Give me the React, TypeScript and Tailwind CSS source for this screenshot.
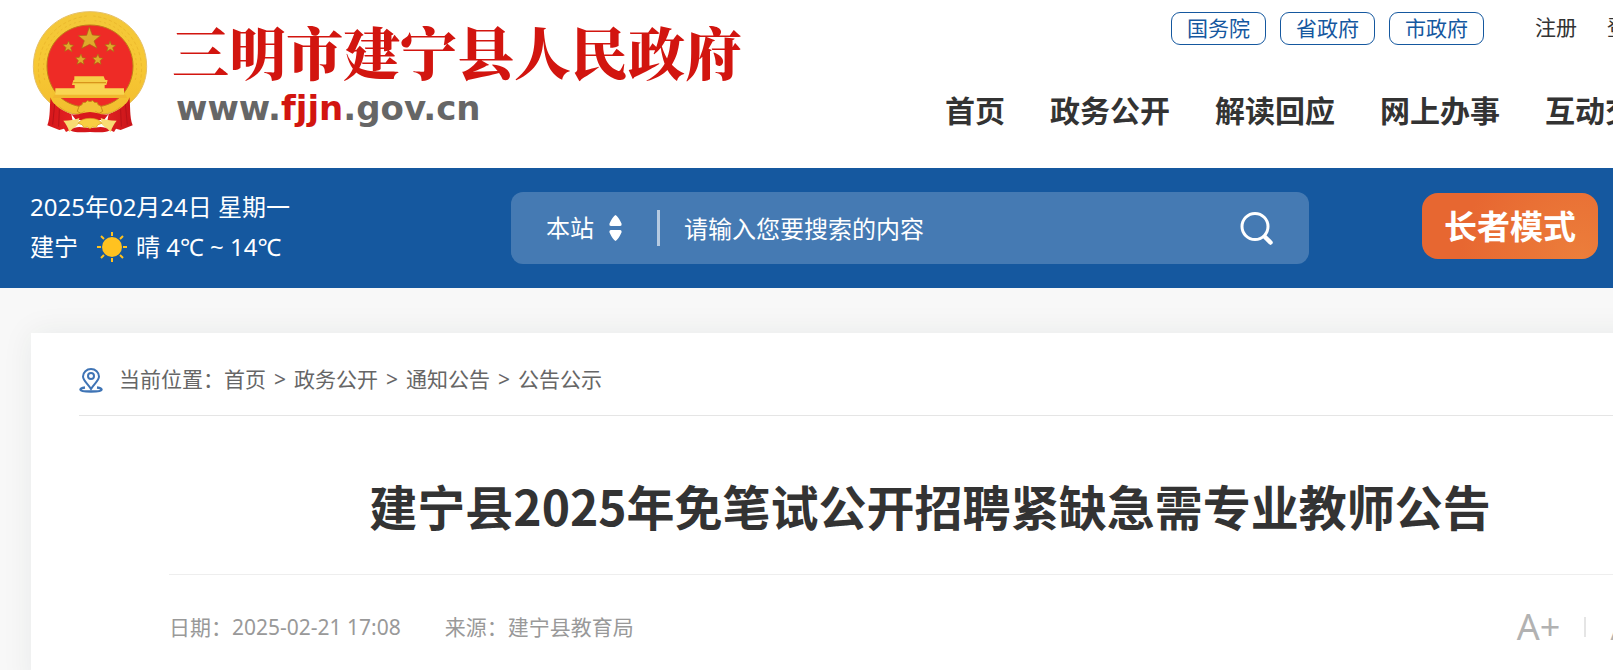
import { useState } from 'react';

const govLinks = ['国务院', '省政府', '市政府'];
const accountLinks = ['注册', '登录'];
const navItems = ['首页', '政务公开', '解读回应', '网上办事', '互动交流'];
const crumbs = ['首页', '政务公开', '通知公告', '公告公示'];

function Emblem() {
  return (
    <svg viewBox="36 30 348 372" className="h-[124px] w-[116px] shrink-0" aria-hidden="true">
      <defs>
        <linearGradient id="gold" x1="0" y1="0" x2="0" y2="1">
          <stop offset="0" stopColor="#f3c739" />
          <stop offset="0.5" stopColor="#f7c834" />
          <stop offset="1" stopColor="#f2bd2e" />
        </linearGradient>
        <linearGradient id="drape" x1="0" y1="0" x2="1" y2="0">
          <stop offset="0" stopColor="#d5161b" />
          <stop offset="0.5" stopColor="#ee2a25" />
          <stop offset="1" stopColor="#c9141a" />
        </linearGradient>
      </defs>
      {/* wreath */}
      <path
        d="M210 35C114 35 40 106 40 200c0 46 20 84 52 110 34 26 74 36 118 36s84-10 118-36c32-26 52-64 52-110C380 106 306 35 210 35z"
        fill="url(#gold)"
        stroke="#e5c067"
        strokeWidth="3"
      />
      <g fill="none" stroke="#d99a1a" strokeWidth="3" opacity="0.3">
        <path d="M60 250C38 150 95 62 200 48M360 250C382 150 325 62 220 48" strokeDasharray="10 7" />
        <path d="M74 240C56 150 106 72 196 62M346 240C364 150 314 72 224 62" strokeDasharray="6 9" />
      </g>
      <path
        d="M210 75C138 75 81 128 81 198c0 36 14 68 36 90 24 24 56 34 93 34s69-10 93-34c22-22 36-54 36-90 0-70-57-123-129-123z"
        fill="#ee2b26"
        stroke="#c27a18"
        strokeWidth="3"
      />
      {/* drapery */}
      <path
        d="M92 292c2 18 30 40 62 50l8 42-24 12-6-10-14 4-36-14c10-26 6-58 10-84zM328 292c-2 18-30 40-62 50l-8 42 24 12 6-10 14 4 36-14c-10-26-6-58-10-84z"
        fill="url(#drape)"
      />
      <path d="M104 312l-6 62M118 328l-2 52M316 312l6 62M302 328l2 52" stroke="#b81218" strokeWidth="3" fill="none" />
      <g fill="#dfaa2b" stroke="#a96d12" strokeWidth="2">
        <path d="M208 81l9 24 24 2-19 16 9 22-22-12-24 12 8-23-18-15 25-1z" />
        <path d="M146 123l4 11 11 2-9 7 4 12-11-7-11 6 4-11-9-9 12-1z" />
        <path d="M270 123l4 11 14 2-10 7 4 12-11-7-11 6 4-11-9-9 12-1z" />
        <path d="M183 162l4 11 11 2-9 7 3 11-10-6-11 6 4-11-8-9 11-1z" />
        <path d="M234 162l4 11 11 2-9 7 3 11-10-6-11 6 4-11-8-9 11-1z" />
      </g>
      {/* gate */}
      <path d="M163 229h88l4 10 8 2-4 14H156l4-14 3-2z" fill="#f6cf48" />
      <path d="M160 248h98" stroke="#d9951c" strokeWidth="4" />
      <path d="M164 253h90v12h58v26H106v-26h58z" fill="#f9d552" />
      <path d="M104 284h212l6 10H98z" fill="#f1b72f" />
      {/* cog wheel */}
      <path
        d="M172 334l4-12 2-4 8-4 2-6 9-1 5-5 8 3 8-3 5 5 9 1 2 6 8 4 2 4 4 12-16 10h-44z"
        fill="#f2c237"
        stroke="#c98a18"
        strokeWidth="3"
      />
      <path d="M118 320c24 22 56 28 76 14M302 320c-24 22-56 28-76 14" stroke="#e0a528" strokeWidth="3" fill="none" />
      <path d="M154 342c18 6 36-6 56-6s38 12 56 6l-14 18H168z" fill="#d9191c" />
      <path d="M130 362c20 0 34-2 48-8l-4 20-26 22c-4-14-10-24-18-34zM290 362c-20 0-34-2-48-8l4 20 26 22c4-14 10-24 18-34z" fill="#f8dc74" />
      <path d="M152 392c16-18 38-8 58-8s42-10 58 8c-18 8-38 4-58 4s-40 4-58-4z" fill="#d5161b" />
      <path
        d="M174 370c4-6 10-10 16-12 14-4 26-4 40 0 6 2 12 6 16 12l-12 4-6 9-10-2-8 5-8-5-10 2-6-9z"
        fill="#f8ce42"
        stroke="#d9951c"
        strokeWidth="2"
      />
    </svg>
  );
}

function SunIcon() {
  return (
    <svg viewBox="0 0 32 32" className="size-8 shrink-0" aria-hidden="true">
      <circle cx="16" cy="16" r="10" fill="#ffc220" />
      <g stroke="#ffc220" strokeWidth="2">
        <path d="M16 1v4M16 27v4M1 16h4M27 16h4M5 5l3 3M24 24l3 3M5 27l3-3M24 8l3-3" />
      </g>
    </svg>
  );
}

function PinIcon() {
  return (
    <svg viewBox="0 0 24 25" className="h-[25px] w-6 shrink-0" fill="none" stroke="#3f74b5" strokeWidth="2" aria-hidden="true">
      <path d="M12 21C9 16 4 12.500 4 8.500a8 7.500 0 0 1 16 0C20 12.500 15 16 12 21z" />
      <circle cx="12" cy="8" r="3" />
      <path d="M6 19.500c-3 .3-4.500 1-4.500 2.200 0 1.300 3 1.800 10.500 1.800s10.500-.5 10.500-1.800c0-1.200-1.500-1.900-4.500-2.200" strokeWidth="2.500" />
    </svg>
  );
}

function Header() {
  return (
    <header className="flex h-[168px] items-start justify-between bg-white px-[30px]">
      <a href="#" className="flex items-start pl-[2px] pt-[10px]">
        <Emblem />
        <span className="flex flex-col pl-6">
          <span className="font-['Noto_Serif_CJK_SC','Noto_Sans_CJK_SC',serif] text-[57px] font-black leading-[80px] text-[#d2150f]">
            三明市建宁县人民政府
          </span>
          <span className="pl-1 font-['DejaVu_Sans',sans-serif] text-[34px] font-bold leading-9 text-[#666]">
            www.<span className="text-[#d2150f]">fjjn</span>.gov.cn
          </span>
        </span>
      </a>
      <div className="flex flex-col pr-[165px] pt-3">
        <div className="flex items-start pl-[226px]">
          <div className="flex gap-[14px]">
            {govLinks.map((item) => (
              <a
                key={item}
                href="#"
                className="rounded-[9px] border border-[#15589f] px-[15px] text-[21px] leading-[31px] text-[#15589f]"
              >
                {item}
              </a>
            ))}
          </div>
          <div className="flex gap-[30px] pl-[51px] text-[21px] leading-[30px] text-[#333]">
            {accountLinks.map((item) => (
              <a key={item} href="#">{item}</a>
            ))}
          </div>
        </div>
        <nav className="flex gap-[45px] pt-[42px] font-['Noto_Sans_CJK_SC',sans-serif] text-3xl font-bold leading-[44px] text-[#333]">
          {navItems.map((item) => (
            <a key={item} href="#">{item}</a>
          ))}
        </nav>
      </div>
    </header>
  );
}

function SearchBar() {
  const [keyword, setKeyword] = useState('');

  return (
    <form
      onSubmit={(e) => e.preventDefault()}
      className="flex h-[72px] w-[798px] items-center rounded-xl bg-[#457ab3] pl-[35px] pr-9 text-2xl text-white"
    >
      <select aria-label="搜索范围" className="h-10 w-[63px] appearance-none bg-transparent outline-none">
        <option>本站</option>
      </select>
      <svg viewBox="0 0 13 26" className="h-[26px] w-[13px]" fill="#fff" aria-hidden="true">
        <path d="M6.500 0Q9 1 12.500 8.500q.5 2.500-1.500 2.500h-9q-2 0-1.500-2.500Q4 1 6.500 0zM6.500 26q2.500-1 6-8.500.5-2.500-1.500-2.500h-9q-2 0-1.500 2.500Q4 25 6.500 26z" />
      </svg>
      <span className="ml-[35px] h-9 w-[3px] bg-[#b5cae1]" />
      <input
        type="text"
        aria-label="搜索内容"
        value={keyword}
        onChange={(e) => setKeyword(e.target.value)}
        placeholder="请输入您要搜索的内容"
        className="ml-6 h-12 min-w-0 flex-1 bg-transparent outline-none placeholder:text-white"
      />
      <button type="submit" aria-label="搜索">
        <svg viewBox="0 0 33 33" className="size-[33px]" fill="none" stroke="#fff" strokeWidth="3" strokeLinecap="round" aria-hidden="true">
          <circle cx="15" cy="14.500" r="13" />
          <path d="M25 25l5.500 5.500" strokeWidth="4.500" />
        </svg>
      </button>
    </form>
  );
}

function InfoBar() {
  return (
    <section className="flex h-[120px] items-center bg-[#15589f] px-[30px] text-white">
      <div className="w-[481px] pb-[2px] text-2xl leading-10">
        <p>2025年02月24日 星期一</p>
        <p className="flex items-center">
          <span className="pr-[18px]">建宁</span>
          <SunIcon />
          <span className="pl-2">晴 4℃ ~ 14℃</span>
        </p>
      </div>
      <SearchBar />
      <button
        type="button"
        className="mb-1 ml-[113px] h-[66px] rounded-2xl bg-[radial-gradient(circle_at_90%_100%,#ec7e3b,#e76731_70%)] px-[22px] pb-[2px] font-['Noto_Sans_CJK_SC',sans-serif] text-[33px] font-bold leading-[50px]"
      >
        长者模式
      </button>
    </section>
  );
}

function Article() {
  return (
    <main className="mx-[31px] mt-[45px] bg-white px-12 pb-10 shadow-[0_0_30px_rgba(0,60,40,0.07)]">
      <nav className="flex h-[83px] items-center border-b border-[#e5e5e5] pt-3 text-[21px] text-[#666]">
        <PinIcon />
        <span className="pl-4">当前位置：</span>
        {crumbs.map((item, index) => (
          <span key={item}>
            {index > 0 && <span className="px-2">&gt;</span>}
            <a href="#">{item}</a>
          </span>
        ))}
      </nav>
      <div className="px-[90px]">
        <h1 className="border-b border-[#eee] pb-[35px] pt-[55px] text-center font-['Noto_Sans_CJK_SC',sans-serif] text-5xl font-bold leading-[68px] text-[#333]">
          建宁县2025年免笔试公开招聘紧缺急需专业教师公告
        </h1>
        <div className="flex items-center justify-between pt-[30px] text-[21px] leading-[44px] text-[#999]">
          <div className="flex gap-11">
            <span>日期：2025-02-21 17:08</span>
            <span>来源：建宁县教育局</span>
          </div>
          <div className="flex items-center gap-6 pr-[46px] text-4xl leading-[44px] text-[#b2b2b2]">
            <button type="button">A+</button>
            <span className="h-5 w-[2px] bg-[#e5e5e5]" />
            <button type="button">A-</button>
          </div>
        </div>
      </div>
    </main>
  );
}

export default function App() {
  return (
    <div className="min-h-screen overflow-hidden bg-[#f8f8f8] font-['Noto_Sans','Noto_Sans_CJK_SC',sans-serif]">
      {/* Desktop layout, wide pages are cut at the window edge */}
      <div className="min-w-[1860px] whitespace-nowrap">
        <Header />
        <InfoBar />
        <Article />
      </div>
    </div>
  );
}
